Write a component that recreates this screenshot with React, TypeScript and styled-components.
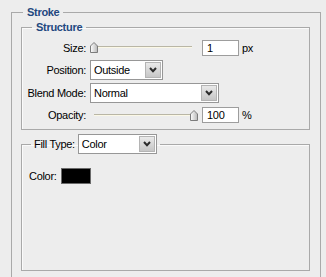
import styled, { createGlobalStyle } from "styled-components";

const GlobalStyle = createGlobalStyle`
  html, body {
    margin: 0;
    padding: 0;
    overflow: hidden;
    background: #ededed;
  }
  body {
    font-family: "Liberation Sans", Arial, sans-serif;
    font-size: 11px;
    letter-spacing: -0.3px;
    color: #000;
  }
`;

const Page = styled.div`
  width: 326px;
  height: 277px;
  box-sizing: border-box;
  padding: 5px 0 0 11px;
  overflow: hidden;
`;

// outer group runs on below the visible area, as in the dialog
const OuterGroup = styled.fieldset`
  box-sizing: border-box;
  width: 310px;
  height: 276px;
  margin: 0;
  padding: 1px 10px 0 9px;
  border: 1px solid #a9a9a9;
  min-inline-size: 0;
`;

const SubGroup = styled.fieldset<{ $height?: number; $top?: number }>`
  box-sizing: border-box;
  margin: ${(p) => p.$top ?? 0}px 0 0 0;
  padding: 2px 0 3px 0;
  border: 1px solid #a9a9a9;
  box-shadow: inset 1px 1px 0 #fafafa;
  min-inline-size: 0;
  ${(p) => (p.$height ? `height: ${p.$height}px;` : "")}
`;

const Title = styled.legend<{ $indent: number }>`
  margin-left: ${(p) => p.$indent}px;
  padding: 0 4px;
  line-height: 14px;
  font-weight: bold;
  color: #23487f;
`;

const FillLegend = styled.legend`
  display: flex;
  align-items: center;
  gap: 3px;
  margin-left: 9px;
  padding: 0 3px;
`;

const Form = styled.div`
  display: grid;
  grid-template-columns: 64px 1fr;
  grid-template-rows: 23px 22px 23px 22px;
  column-gap: 4px;
  align-items: center;
`;

const Label = styled.span`
  text-align: right;
  white-space: nowrap;
`;

const Controls = styled.div`
  display: flex;
  align-items: center;
`;

const SliderBox = styled.div`
  position: relative;
  width: 108px;
  height: 11px;
  margin-right: 4px;
`;

const Track = styled.div`
  position: absolute;
  left: 4px;
  right: 6px;
  top: 4px;
  height: 1px;
  background: #b9b6a6;
  border-bottom: 1px solid #fbf8e6;
`;

const Thumb = styled.svg<{ $pos: number }>`
  position: absolute;
  top: 0;
  left: ${(p) => p.$pos}%;
  margin-left: ${(p) => -(p.$pos * 8) / 100}px;
`;

const NumInput = styled.div`
  box-sizing: border-box;
  width: 37px;
  height: 16px;
  padding: 0 4px;
  border: 1px solid #9d9d9d;
  background: #fff;
  line-height: 14px;
`;

const Unit = styled.span`
  margin-left: 3px;
`;

const SelectBox = styled.div<{ $width: number }>`
  box-sizing: border-box;
  display: flex;
  align-items: center;
  width: ${(p) => p.$width}px;
  height: 20px;
  padding: 1px 1px 1px 3px;
  border: 1px solid #979797;
  background: #fff;
`;

const SelectText = styled.span`
  flex: 1;
  line-height: 16px;
`;

const DropButton = styled.div`
  box-sizing: border-box;
  display: flex;
  align-items: center;
  justify-content: center;
  width: 16px;
  height: 16px;
  border: 1px solid #b4b4b4;
  background: linear-gradient(#e9e9e9, #c6c6c6);
`;

const ColorRow = styled.div`
  display: flex;
  align-items: center;
  gap: 4px;
  padding: 12px 0 0 7px;
`;

const Swatch = styled.div<{ $color: string }>`
  box-sizing: border-box;
  width: 30px;
  height: 16px;
  border: 1px solid #6a6a6a;
  background: ${(p) => p.$color};
`;

const Slider = ({ value }: { value: number }) => (
  <SliderBox>
    <Track />
    <Thumb $pos={value} width="8" height="11" viewBox="0 0 8 11">
      <defs>
        <linearGradient id={`tg${value}`} x1="0" y1="0" x2="1" y2="0">
          <stop offset="0" stopColor="#ffffff" />
          <stop offset="1" stopColor="#b8b8b8" />
        </linearGradient>
      </defs>
      <path
        d="M0.5 4 L4 0.5 L7.5 4 V10.5 H0.5 Z"
        fill={`url(#tg${value})`}
        stroke="#7c7c7c"
      />
    </Thumb>
  </SliderBox>
);

const Select = ({ value, width }: { value: string; width: number }) => (
  <SelectBox $width={width}>
    <SelectText>{value}</SelectText>
    <DropButton>
      <svg width="8" height="6" viewBox="0 0 8 6">
        <polyline
          points="1,1 4,4.2 7,1"
          fill="none"
          stroke="#2b2b2b"
          strokeWidth="2"
        />
      </svg>
    </DropButton>
  </SelectBox>
);

const App = () => {
  return (
    <>
      <GlobalStyle />
      <Page>
        <OuterGroup>
          <Title $indent={2}>Stroke</Title>
          <SubGroup>
            <Title $indent={10}>Structure</Title>
            <Form>
              <Label>Size:</Label>
              <Controls>
                <Slider value={0} />
                <NumInput>1</NumInput>
                <Unit>px</Unit>
              </Controls>
              <Label>Position:</Label>
              <Controls>
                <Select value="Outside" width={73} />
              </Controls>
              <Label>Blend Mode:</Label>
              <Controls>
                <Select value="Normal" width={129} />
              </Controls>
              <Label>Opacity:</Label>
              <Controls>
                <Slider value={100} />
                <NumInput>100</NumInput>
                <Unit>%</Unit>
              </Controls>
            </Form>
          </SubGroup>
          <SubGroup $top={4} $height={137}>
            <FillLegend>
              <span>Fill Type:</span>
              <Select value="Color" width={79} />
            </FillLegend>
            <ColorRow>
              <span>Color:</span>
              <Swatch $color="#000" />
            </ColorRow>
          </SubGroup>
        </OuterGroup>
      </Page>
    </>
  );
};

export default App;
